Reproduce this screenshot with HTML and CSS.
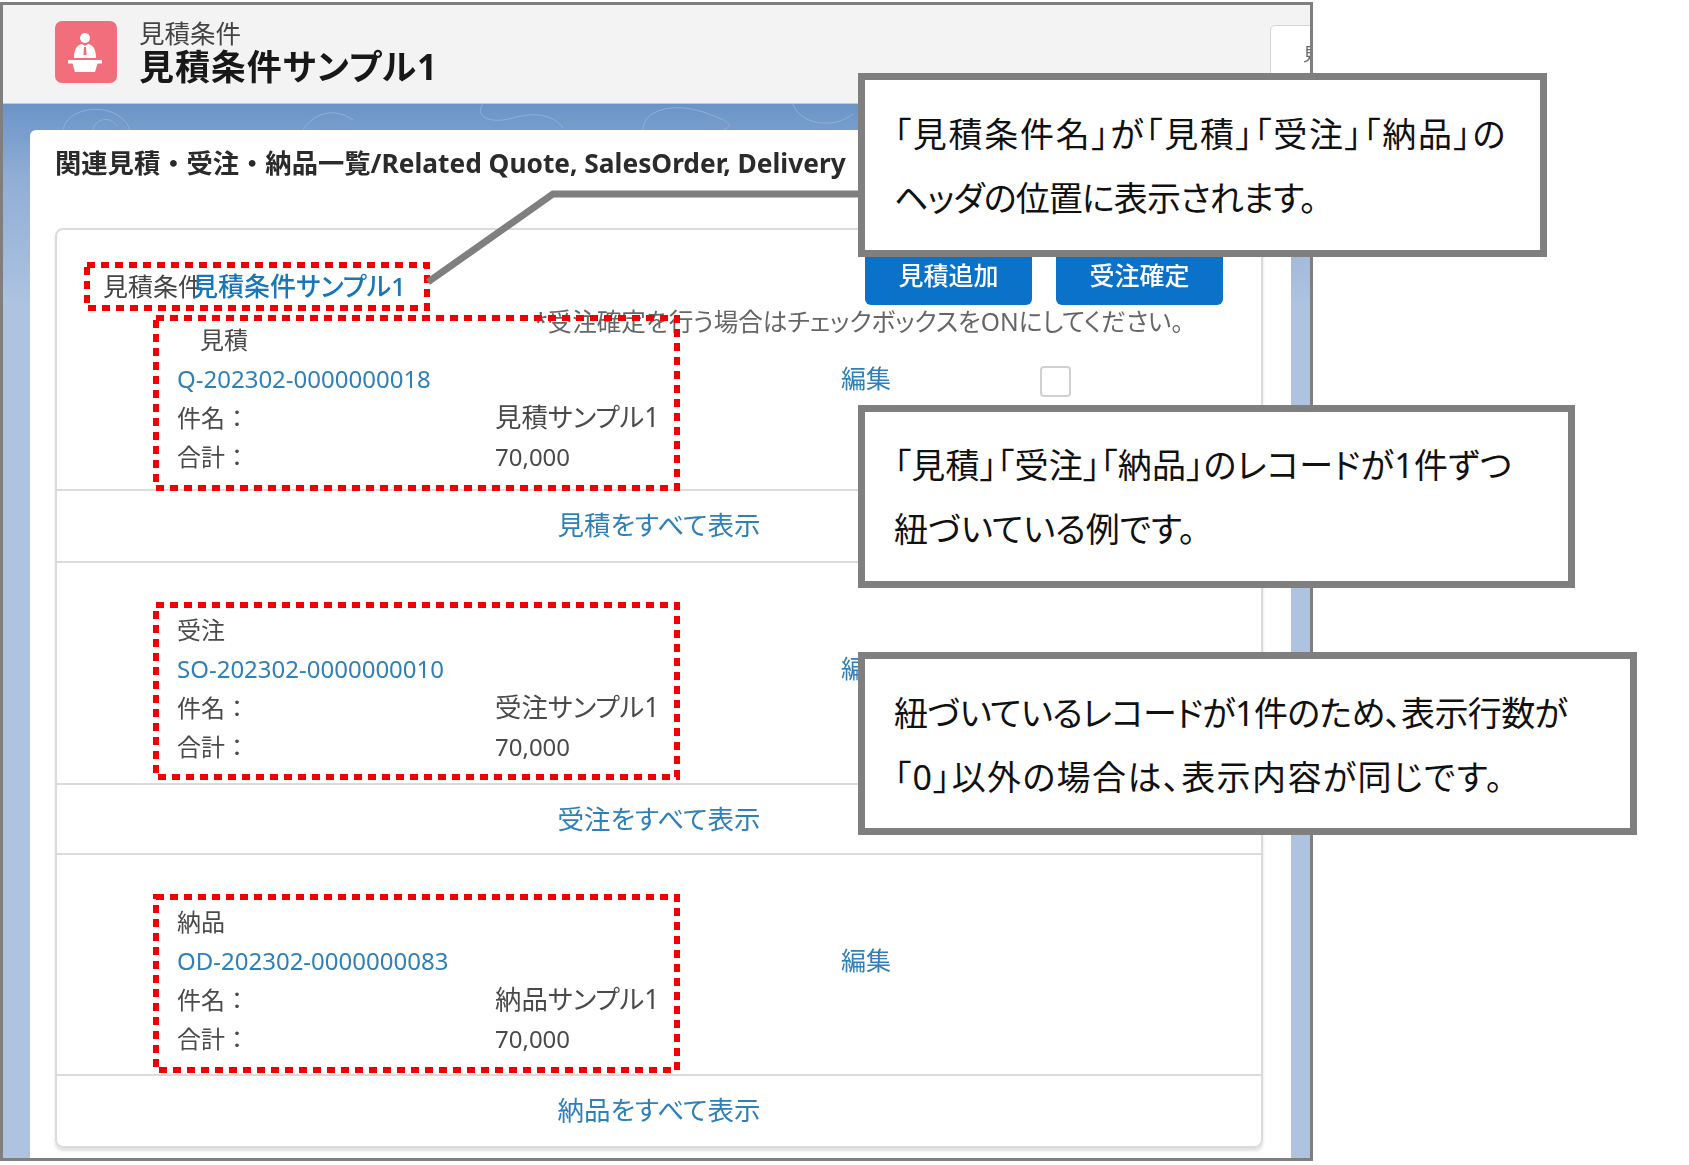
FILE: index.html
```html
<!DOCTYPE html>
<html lang="ja">
<head>
    <meta name="viewport" content="width=device-width, initial-scale=1.0">
    <title>見積条件サンプル1</title>
    <link rel="stylesheet" href="styles.css">
</head>
<body>
    <div class="page">
        <div class="frame">
            <div class="header">
                <div class="app-icon">
                    <svg width="46" height="46" viewBox="0 0 46 46">
                        <circle cx="22" cy="9" r="5" fill="#fff"/>
                        <path d="M11 29c0-9 3-13 8-14l3 2 3-2c5 1 8 5 8 14z" fill="#fff"/>
                        <path d="M21 18h2l.6 8h-3.200z" fill="#f36e7c"/>
                        <path d="M5 31h34v3.500h-4.500L32 43H12l-2.500-8.500H5z" fill="#fff"/>
                    </svg>
                </div>
                <div class="header-text">
                    <div class="object-name">見積条件</div>
                    <div class="record-name">見積条件サンプル1</div>
                </div>
                <div class="header-tab">見</div>
            </div>
            <div class="backdrop">
                <svg class="contours" width="1306" height="26" viewBox="0 0 1306 26">
                    <path d="M60 26c4-22 40-26 56-14s10 20 2 14M90 26c2-12 18-14 24-4M300 26c10-16 30-24 50-10M480 0c-10 14 10 20 30 14s40-4 50 10M640 26c0-20 30-28 60-18s30 14 20 18M790 0c6 20 40 26 60 10" fill="none" stroke="#8fb0d8" stroke-width="1"/>
                </svg>
                <div class="card">
                    <div class="card-title">関連見積・受注・納品一覧/Related Quote, SalesOrder, Delivery</div>
                    <div class="inner">
                        <div class="inner-head">
                            <div class="quote-title">
                                <span class="quote-label">見積条件</span><a class="quote-link" href="#">見積条件サンプル1</a>
                            </div>
                            <div class="buttons">
                                <button class="btn">見積追加</button>
                                <button class="btn">受注確定</button>
                            </div>
                        </div>
                        <div class="note">*受注確定を行う場合はチェックボックスをONにしてください。</div>

                        <div class="record record-first">
                            <div class="rec-label rec-indent">見積</div>
                            <a class="rec-link" href="#">Q-202302-0000000018</a>
                            <div></div>
                            <a class="rec-edit" href="#">編集</a>
                            <span class="check"></span>
                            <div class="rec-key">件名：</div>
                            <div class="rec-name">見積サンプル1</div>
                            <div></div>
                            <div></div>
                            <div class="rec-key">合計：</div>
                            <div>70,000</div>
                        </div>
                        <div class="show-all show-line show-first"><a href="#">見積をすべて表示</a></div>

                        <div class="record record-second">
                            <div class="rec-label">受注</div>
                            <a class="rec-link" href="#">SO-202302-0000000010</a>
                            <div></div>
                            <a class="rec-edit" href="#">編集</a>
                            <div></div>
                            <div class="rec-key">件名：</div>
                            <div class="rec-name">受注サンプル1</div>
                            <div></div>
                            <div></div>
                            <div class="rec-key">合計：</div>
                            <div>70,000</div>
                        </div>
                        <div class="show-all show-line"><a href="#">受注をすべて表示</a></div>

                        <div class="record record-third">
                            <div class="rec-label">納品</div>
                            <a class="rec-link" href="#">OD-202302-0000000083</a>
                            <div></div>
                            <a class="rec-edit" href="#">編集</a>
                            <div></div>
                            <div class="rec-key">件名：</div>
                            <div class="rec-name">納品サンプル1</div>
                            <div></div>
                            <div></div>
                            <div class="rec-key">合計：</div>
                            <div>70,000</div>
                        </div>
                        <div class="show-all"><a href="#">納品をすべて表示</a></div>
                    </div>
                </div>
            </div>
        </div>

        <!-- annotations on top of the screenshot -->
        <svg class="marks" width="1689" height="1165" viewBox="0 0 1689 1165">
            <rect class="dots" x="87" y="265" width="340" height="43"/>
            <rect class="dots" x="156" y="318" width="521" height="170"/>
            <rect class="dots" x="156" y="605" width="521" height="172"/>
            <rect class="dots" x="156" y="897" width="521" height="173"/>
            <path class="leader" d="M428 282L553 194H862"/>
        </svg>
        <div class="callout callout-a"><span class="line-a1">「見積条件名」が「見積」「受注」「納品」の</span><br><span class="line-a2">ヘッダの位置に表示されます。</span></div>
        <div class="callout callout-b"><span class="line-b1">「見積」「受注」「納品」のレコードが1件ずつ</span><br><span>紐づいている例です。</span></div>
        <div class="callout callout-c"><span class="line-c1">紐づいているレコードが1件のため、表示行数が</span><br><span class="line-c2">「0」以外の場合は、表示内容が同じです。</span></div>
    </div>
</body>
</html>
```

FILE: styles.css
```css
html, body {
    margin: 0;
    padding: 0;
    background-color: #fff;
}
body {
    font-family: "Noto Sans", "Noto Sans CJK JP", sans-serif;
    font-feature-settings: "palt";
    color: #3e3e3c;
}
a {
    color: #2f7fb8;
    text-decoration: none;
}
.page {
    position: relative;
    width: 1689px;
    height: 1165px;
    overflow: hidden;
}
.frame {
    box-sizing: border-box;
    width: 1313px;
    height: 1159px;
    margin-top: 2px;
    border: 3px solid #7f7f7f;
    display: flex;
    flex-direction: column;
    filter: blur(0.5px);
}
.header {
    height: 99px;
    flex: none;
    display: flex;
    align-items: center;
    padding-left: 52px;
    background-color: #f3f3f3;
    border-bottom: 1px solid #c9c9c9;
    box-sizing: border-box;
    overflow: hidden;
}
.app-icon {
    width: 62px;
    height: 62px;
    border-radius: 7px;
    background-color: #f36e7c;
    display: flex;
    align-items: center;
    justify-content: center;
    margin-top: -4px;
}
.header-text {
    margin-left: 22px;
    margin-top: -4px;
}
.object-name {
    font-size: 25.500px;
    line-height: 30px;
    color: #444;
}
.record-name {
    font-size: 35px;
    line-height: 38px;
    font-weight: 700;
    letter-spacing: 0.900px;
    color: #181818;
}
.header-tab {
    margin-left: auto;
    margin-right: -4px;
    align-self: flex-start;
    margin-top: 20px;
    width: 44px;
    height: 70px;
    box-sizing: border-box;
    padding: 14px 0 0 32px;
    font-size: 18px;
    color: #666;
    background-color: #fff;
    border: 1px solid #d5d5d5;
    border-radius: 5px 0 0 5px;
    white-space: nowrap;
}
.backdrop {
    flex: 1;
    min-height: 0;
    position: relative;
    padding: 26px 19px 0 27px;
    display: flex;
    background: linear-gradient(#6a94c6 0, #8fadd5 70px, #adc3e0 200px);
}
.contours {
    position: absolute;
    left: 0;
    top: 0;
}
.card {
    position: relative;
    flex: 1;
    background-color: #fff;
    border-radius: 6px 6px 0 0;
    padding-left: 25px;
    padding-right: 28px;
}
.card-title {
    height: 98px;
    box-sizing: border-box;
    padding-top: 17px;
    font-size: 26.300px;
    line-height: 32px;
    font-weight: 700;
    font-feature-settings: normal;
    color: #2b2b2b;
    white-space: nowrap;
}
.inner {
    box-sizing: border-box;
    height: 920px;
    border: 2px solid #dddbda;
    border-radius: 8px;
    box-shadow: 0 3px 3px rgba(0, 0, 0, 0.12);
    font-size: 24px;
}
.inner-head {
    display: flex;
    justify-content: space-between;
    height: 73px;
    padding: 20px 38px 0 46px;
    box-sizing: border-box;
}
.quote-title {
    display: flex;
    padding-top: 18px;
    line-height: 36px;
}
.quote-label {
    width: 89px;
    font-size: 25px;
    white-space: nowrap;
    color: #444;
}
.quote-link {
    font-size: 26px;
    font-weight: 500;
    color: #1b76b8;
    white-space: nowrap;
}
.buttons {
    display: flex;
    gap: 24px;
}
.btn {
    width: 167px;
    height: 55px;
    padding: 0 0 8px;
    border: none;
    border-radius: 6px;
    background-color: #0b72c9;
    color: #fff;
    font-family: inherit;
    font-feature-settings: inherit;
    font-size: 25px;
    font-weight: 500;
}
.note {
    height: 36px;
    margin-bottom: -21px;
    padding-left: 477px;
    line-height: 38px;
    font-size: 24.600px;
    color: #666;
    white-space: nowrap;
}
.record {
    display: grid;
    grid-template-columns: 318px 346px 199px 40px;
    grid-auto-rows: 39px;
    align-items: center;
    padding-left: 120px;
    line-height: 39px;
    white-space: nowrap;
    color: #4a4a4a;
}
.record-first {
    padding-top: 2px;
    padding-bottom: 13px;
}
.record-second {
    padding-top: 47px;
    padding-bottom: 17px;
}
.record-third {
    padding-top: 47px;
    padding-bottom: 16px;
}
.rec-label {
    grid-column: 1 / -1;
}
.rec-indent {
    padding-left: 23px;
}
.rec-key {
    font-feature-settings: normal;
}
.rec-name {
    font-size: 26.400px;
}
.rec-edit {
    font-size: 25px;
}
.check {
    width: 27px;
    height: 27px;
    margin-top: 6px;
    border: 2px solid #d0d0d0;
    border-radius: 4px;
    background-color: #fff;
}
.show-all {
    height: 70px;
    border-top: 2px solid #dddbda;
    display: flex;
    align-items: center;
    justify-content: center;
    padding-bottom: 4px;
    box-sizing: border-box;
    font-size: 26.500px;
}
.show-line {
    border-bottom: 2px solid #dddbda;
    height: 72px;
}
.show-first {
    height: 74px;
    padding-bottom: 6px;
}
.marks {
    position: absolute;
    left: 0;
    top: 0;
}
.dots {
    fill: none;
    stroke: #f00000;
    stroke-width: 6;
    stroke-dasharray: 8 6;
}
.leader {
    fill: none;
    stroke: #7f7f7f;
    stroke-width: 7;
}
.callout {
    position: absolute;
    left: 858px;
    box-sizing: border-box;
    border: 7px solid #7f7f7f;
    background-color: #fff;
    padding-left: 29px;
    font-size: 34px;
    line-height: 64px;
    color: #111;
    white-space: nowrap;
}
.callout-a {
    top: 73px;
    width: 689px;
    height: 184px;
    padding-top: 22px;
}
.callout-b {
    top: 405px;
    width: 717px;
    height: 183px;
    padding-top: 21px;
}
.callout-c {
    top: 652px;
    width: 779px;
    height: 183px;
    padding-top: 22px;
}
/* the original font is narrower in kana, so each line is fitted by hand */
.line-a1 {
    letter-spacing: 1.760px;
}
.line-a2 {
    letter-spacing: -0.850px;
}
.line-b1 {
    letter-spacing: 0.300px;
}
.line-c1 {
    letter-spacing: -0.600px;
}
.line-c2 {
    letter-spacing: 1.400px;
}
```
